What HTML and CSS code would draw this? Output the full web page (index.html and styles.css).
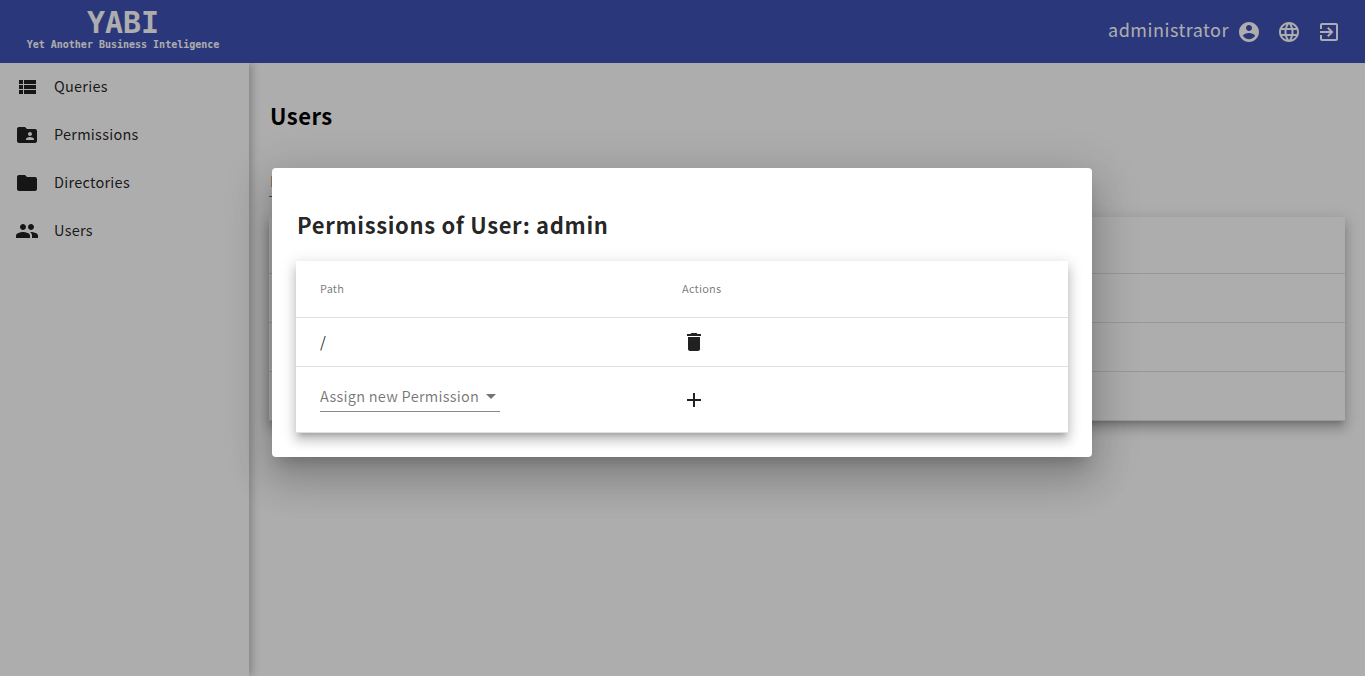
FILE: index.html
```html
<!DOCTYPE html>
<html lang="en">
<head>
<meta charset="utf-8">
<title>YABI</title>
<link rel="stylesheet" href="styles.css">
</head>
<body>
<header class="toolbar">
  <div class="brand">
    <div class="brand-name">YABI</div>
    <div class="brand-sub">Yet Another Business Inteligence</div>
  </div>
  <div class="account">
    <span class="account-name">administrator</span>
    <svg class="icon" viewBox="0 0 24 24"><path d="M12 2C6.48 2 2 6.48 2 12s4.48 10 10 10 10-4.48 10-10S17.52 2 12 2zm0 3c1.66 0 3 1.34 3 3s-1.34 3-3 3-3-1.34-3-3 1.34-3 3-3zm0 14.200c-2.500 0-4.710-1.280-6-3.220.03-1.990 4-3.080 6-3.080 1.990 0 5.970 1.090 6 3.080-1.290 1.940-3.500 3.220-6 3.220z"/></svg>
    <svg class="icon" viewBox="0 0 24 24"><path d="M11.990 2C6.470 2 2 6.480 2 12s4.470 10 9.990 10C17.520 22 22 17.520 22 12S17.520 2 11.990 2zm6.930 6h-2.950c-.32-1.250-.78-2.450-1.380-3.560 1.840.63 3.370 1.910 4.330 3.560zM12 4.040c.83 1.200 1.480 2.530 1.910 3.960h-3.820c.43-1.430 1.080-2.760 1.910-3.960zM4.260 14C4.100 13.360 4 12.690 4 12s.1-1.360.26-2h3.380c-.08.66-.14 1.320-.14 2s.06 1.340.14 2H4.260zm.82 2h2.950c.32 1.250.78 2.450 1.380 3.560-1.840-.63-3.370-1.900-4.330-3.560zm2.950-8H5.080c.96-1.660 2.490-2.930 4.330-3.560C8.810 5.550 8.350 6.750 8.030 8zM12 19.960c-.83-1.200-1.480-2.530-1.910-3.960h3.820c-.43 1.430-1.080 2.760-1.910 3.960zM14.340 14H9.660c-.09-.66-.16-1.320-.16-2s.07-1.350.16-2h4.680c.09.65.16 1.320.16 2s-.07 1.340-.16 2zm.25 5.560c.6-1.110 1.060-2.310 1.380-3.560h2.950c-.96 1.650-2.490 2.930-4.330 3.560zM16.360 14c.08-.66.14-1.320.14-2s-.06-1.340-.14-2h3.380c.16.64.26 1.310.26 2s-.1 1.360-.26 2h-3.380z"/></svg>
    <svg class="icon" viewBox="0 0 24 24"><path d="M10.090 15.590L11.500 17l5-5-5-5-1.410 1.410L12.670 11H3v2h9.670l-2.580 2.590zM19 3H5c-1.110 0-2 .9-2 2v4h2V5h14v14H5v-4H3v4c0 1.100.89 2 2 2h14c1.100 0 2-.9 2-2V5c0-1.100-.9-2-2-2z"/></svg>
  </div>
</header>
<div class="body">
  <nav class="sidebar">
    <a class="nav-item"><svg class="icon" viewBox="0 0 24 24"><path d="M4 14h4v-4H4v4zm0 5h4v-4H4v4zM4 9h4V5H4v4zm5 5h12v-4H9v4zm0 5h12v-4H9v4zM9 5v4h12V5H9z"/></svg><span>Queries</span></a>
    <a class="nav-item"><svg class="icon" viewBox="0 0 24 24"><path d="M20 6h-8l-2-2H4c-1.100 0-1.990.9-1.990 2L2 18c0 1.100.9 2 2 2h16c1.100 0 2-.9 2-2V8c0-1.100-.9-2-2-2zm-5 3c1.100 0 2 .9 2 2s-.9 2-2 2-2-.9-2-2 .9-2 2-2zm4 8h-8v-1c0-1.330 2.670-2 4-2s4 .67 4 2v1z"/></svg><span>Permissions</span></a>
    <a class="nav-item"><svg class="icon" viewBox="0 0 24 24"><path d="M10 4H4c-1.100 0-1.990.9-1.990 2L2 18c0 1.100.9 2 2 2h16c1.100 0 2-.9 2-2V8c0-1.100-.9-2-2-2h-8l-2-2z"/></svg><span>Directories</span></a>
    <a class="nav-item"><svg class="icon" viewBox="0 0 24 24"><path d="M16 11c1.660 0 2.990-1.340 2.990-3S17.660 5 16 5c-1.660 0-3 1.340-3 3s1.340 3 3 3zm-8 0c1.660 0 2.990-1.340 2.990-3S9.660 5 8 5C6.340 5 5 6.340 5 8s1.340 3 3 3zm0 2c-2.330 0-7 1.170-7 3.500V19h14v-2.500c0-2.330-4.670-3.500-7-3.500zm8 0c-.29 0-.62.02-.97.05 1.160.84 1.970 1.970 1.970 3.450V19h6v-2.500c0-2.330-4.670-3.500-7-3.500z"/></svg><span>Users</span></a>
  </nav>
  <main class="content">
    <h2 class="page-title">Users</h2>
    <div class="filter">Filter</div>
    <div class="card users">
      <div class="row head"></div>
      <div class="row"></div>
      <div class="row"></div>
      <div class="row"></div>
    </div>
  </main>
</div>
<div class="scrim">
  <section class="dialog">
    <h2 class="dialog-title">Permissions of User: admin</h2>
    <div class="card">
      <div class="row head"><span>Path</span><span>Actions</span></div>
      <div class="row"><span class="path">/</span><svg class="icon" viewBox="0 0 24 24"><path d="M6 19c0 1.100.9 2 2 2h8c1.100 0 2-.9 2-2V7H6v12zM19 4h-3.500l-1-1h-5l-1 1H5v2h14V4z"/></svg></div>
      <div class="row assign">
        <div class="select"><span>Assign new Permission</span><i class="arrow"></i></div>
        <svg class="icon" viewBox="0 0 24 24"><path d="M19 13h-6v6h-2v-6H5v-2h6V5h2v6h6v2z"/></svg>
      </div>
    </div>
  </section>
</div>
</body>
</html>
```
FILE: styles.css
```css
* { box-sizing: border-box; }
body {
  margin: 0;
  height: 676px;
  overflow: hidden;
  display: flex;
  flex-direction: column;
  background: #fff;
  color: rgba(0, 0, 0, .87);
  font-family: "Noto Sans CJK SC", "Open Sans", sans-serif;
  font-size: 14.5px;
  letter-spacing: .25px;
}
.icon { width: 24px; height: 24px; flex: none; fill: currentColor; display: block; }
.toolbar {
  position: relative;
  z-index: 1;
  height: 63px;
  flex: none;
  display: flex;
  justify-content: space-between;
  background: #3f51b5;
  color: #fff;
}
.brand { width: 246px; text-align: center; font-family: "DejaVu Sans Mono", monospace; font-weight: bold; letter-spacing: 0; }
.brand-name { height: 39px; font-size: 30px; line-height: 34px; padding-top: 6px; }
.brand-sub { font-size: 10px; line-height: 12px; }
.account { display: flex; align-items: center; gap: 16px; padding-right: 24px; }
.account-name { font-size: 18px; line-height: 28px; letter-spacing: .5px; margin: -6px -8px 0 0; }
.body { flex: 1; display: flex; }
.sidebar { width: 249px; flex: none; box-shadow: 3px 0 8px rgba(0, 0, 0, .24); }
.nav-item { height: 48px; display: flex; align-items: center; gap: 15px; padding-left: 15px; }
.nav-item span { padding-bottom: 3px; }
.content { flex: 1; padding: 0 20px; }
.page-title { margin: 37px 0 0 1px; font-size: 22px; line-height: 30px; letter-spacing: .5px; color: #000; }
.filter { width: 180px; height: 25px; margin-top: 42px; padding-left: 1px; line-height: 17px; color: rgba(0, 0, 0, .6); border-bottom: 1px solid rgba(0, 0, 0, .6); }
.card {
  background: #fff;
  box-shadow: 0 5px 5px -3px rgba(0, 0, 0, .2), 0 8px 10px 1px rgba(0, 0, 0, .14), 0 3px 14px 2px rgba(0, 0, 0, .12);
}
.users { margin-top: 20px; }
.row { height: 49px; display: grid; grid-template-columns: 362px 1fr; align-items: center; padding: 0 24px; border-bottom: 1px solid rgba(0, 0, 0, .12); }
.head { height: 57px; padding-bottom: 2px; font-size: 11px; letter-spacing: .2px; color: rgba(0, 0, 0, .54); }
.path { font-size: 15px; padding-bottom: 1px; }
.assign { height: 66px; }
.scrim { position: absolute; inset: 0; z-index: 2; background: rgba(0, 0, 0, .32); }
.dialog {
  width: 820px;
  height: 289px;
  margin: 168px 0 0 272px;
  padding: 24px;
  border-radius: 4px;
  background: #fff;
  box-shadow: 0 11px 15px -7px rgba(0, 0, 0, .2), 0 24px 38px 3px rgba(0, 0, 0, .14), 0 9px 46px 8px rgba(0, 0, 0, .12);
}
.dialog-title { margin: 17px 0 22px 1px; font-size: 22px; line-height: 30px; letter-spacing: .65px; }
.select {
  width: 180px;
  height: 32px;
  margin-top: 13px;
  padding-right: 4px;
  align-self: start;
  display: flex;
  align-items: center;
  justify-content: space-between;
  white-space: nowrap;
  color: rgba(0, 0, 0, .54);
  border-bottom: 1px solid rgba(0, 0, 0, .46);
}
.select span { padding-bottom: 1px; }
.arrow { margin-top: 2px; border: 5px solid transparent; border-top-color: currentColor; border-bottom: 0; }
```
